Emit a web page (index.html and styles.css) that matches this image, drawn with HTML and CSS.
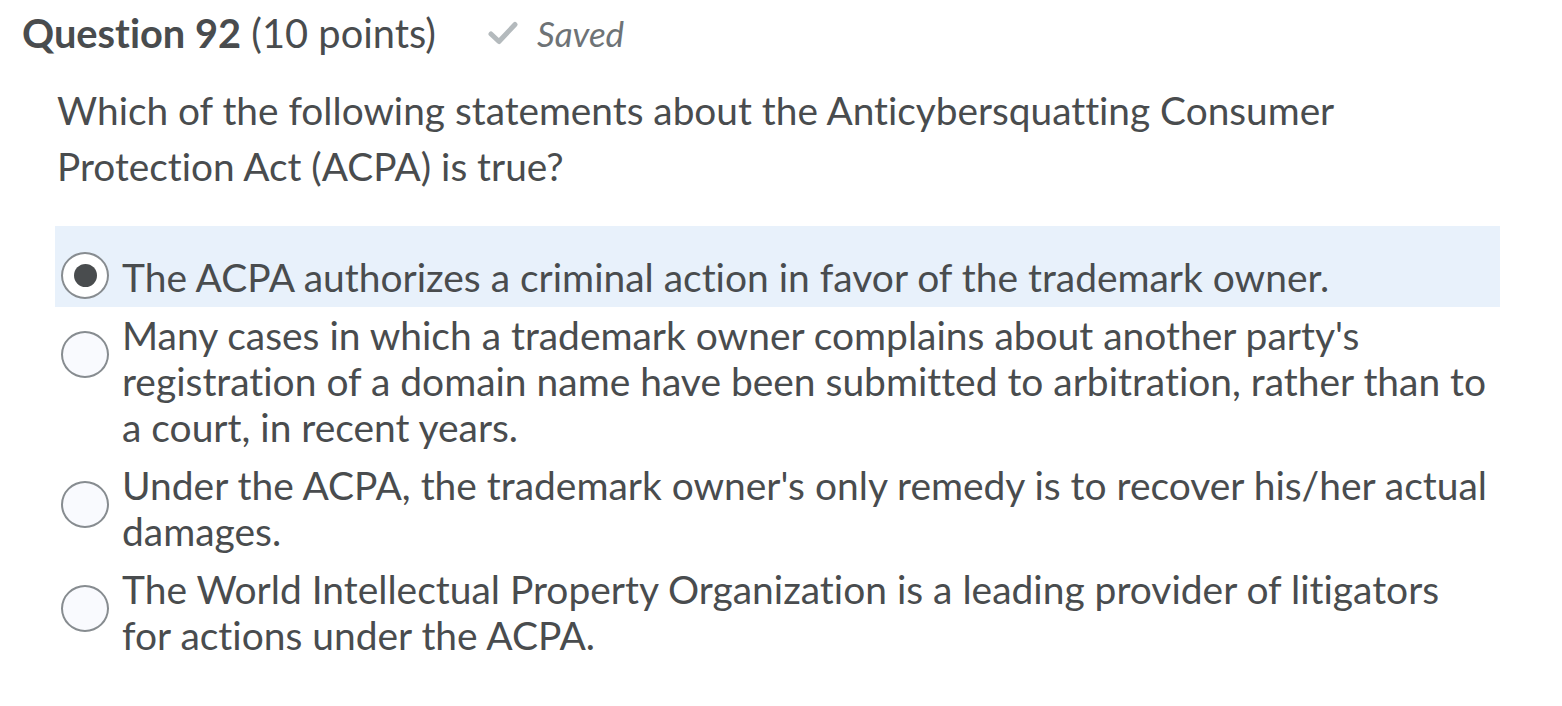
FILE: index.html
```html
<!DOCTYPE html>
<html lang="en">
<head>
<meta charset="utf-8">
<title>Question 92</title>
<link rel="stylesheet" href="styles.css">
</head>
<body>
<div class="page">
  <div class="header">
    <h2 class="title"><strong>Question 92</strong> <span class="points">(10 points)</span></h2>
    <div class="saved">
      <svg class="check" viewBox="0 0 30 24" width="30" height="24" aria-hidden="true"><path d="M3 13 L11 20.5 L27 3.5" fill="none" stroke="#b4babd" stroke-width="5" stroke-linecap="round" stroke-linejoin="round"/></svg>
      <span class="saved-text">Saved</span>
    </div>
  </div>
  <p class="question">Which of the following statements about the Anticybersquatting Consumer Protection Act (ACPA) is true?</p>
  <div class="options">
    <label class="option selected">
      <span class="radio checked"><span class="dot"></span></span>
      <span class="opt-text">The ACPA authorizes a criminal action in favor of the trademark owner.</span>
    </label>
    <label class="option">
      <span class="radio"></span>
      <span class="opt-text">Many cases in which a trademark owner complains about another party's registration of a domain name have been submitted to arbitration, rather than to a court, in recent years.</span>
    </label>
    <label class="option">
      <span class="radio"></span>
      <span class="opt-text">Under the ACPA, the trademark owner's only remedy is to recover his/her actual damages.</span>
    </label>
    <label class="option">
      <span class="radio"></span>
      <span class="opt-text">The World Intellectual Property Organization is a leading provider of litigators for actions under the ACPA.</span>
    </label>
  </div>
</div>
</body>
</html>
```
FILE: styles.css
```css
html, body {
  margin: 0;
  padding: 0;
  background: #ffffff;
}
body {
  font-family: Lato, "Open Sans", "Liberation Sans", sans-serif;
  color: #494c4e;
  font-variant-ligatures: none;
}
.page {
  padding: 8px 0 0 22px;
}
.header {
  display: flex;
  align-items: center;
  gap: 52px;
  height: 50px;
}
.title {
  margin: 0;
  font-size: 39.8px;
  font-weight: 400;
  line-height: 50px;
  white-space: nowrap;
}
.title strong {
  font-weight: 700;
}
.saved {
  display: flex;
  align-items: center;
  gap: 19px;
}
.check {
  display: block;
}
.saved-text {
  font-style: italic;
  font-size: 35px;
  color: #6e7376;
}
.question {
  margin: 24px 0 0 35px;
  font-size: 38.8px;
  line-height: 56px;
  width: 1400px;
}
.options {
  margin: 32px 0 0 33px;
  width: 1445px;
}
.option {
  display: flex;
  align-items: flex-start;
  gap: 13px;
  padding: 0 0 0 6px;
  margin-bottom: 12px;
}
.option.selected {
  background: #e8f1fb;
  padding-top: 28px;
  padding-bottom: 7px;
  margin-bottom: 5px;
}
.radio {
  flex: none;
  box-sizing: border-box;
  width: 48px;
  height: 47px;
  border: 2px solid #878c90;
  border-radius: 50%;
  background: #f9fafe;
  margin-top: 19px;
  display: flex;
  align-items: center;
  justify-content: center;
}
.radio.checked {
  margin-top: -2px;
  background: #ffffff;
}
.dot {
  width: 23px;
  height: 23px;
  border-radius: 50%;
  background: #494c4e;
}
.opt-text {
  font-size: 38.95px;
  line-height: 46px;
  width: 1370px;
}
```
